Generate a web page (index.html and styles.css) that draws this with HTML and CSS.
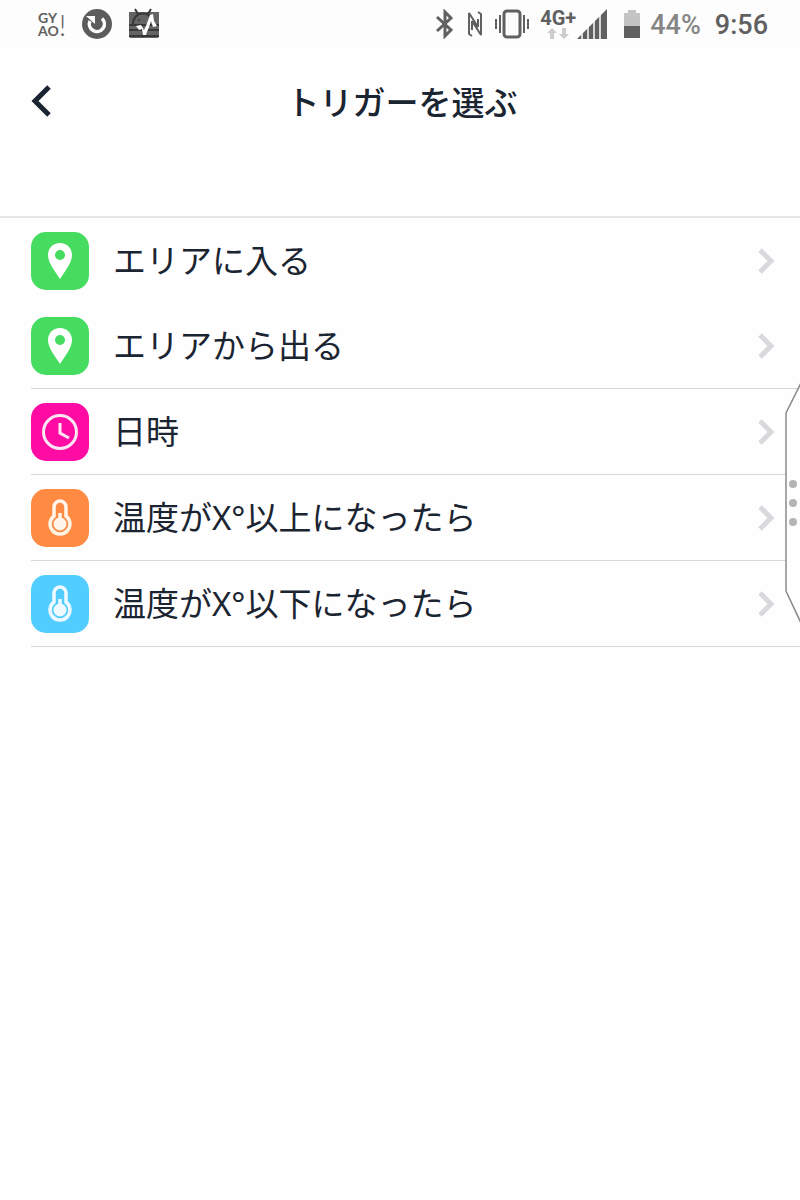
FILE: index.html
```
<!DOCTYPE html>
<html lang="ja">
<head>
  <meta charset="UTF-8" />
  <meta name="viewport" content="width=device-width, initial-scale=1.0"/>
  <title>トリガーを選ぶ</title>
  <link rel="stylesheet" href="styles.css">
</head>
<body>
  <div class="status-bar">
    <div class="status-left">
      <div class="gyao">
        <span>GY<br>AO</span>
        <span class="mark">!</span>
      </div>
      <svg width="32" height="32" viewBox="0 0 32 32">
        <circle cx="16" cy="16" r="15" fill="#5c5c5c"/>
        <path d="M21 10.500A7.500 7.500 0 1 1 9 13" fill="none" stroke="#fff" stroke-width="3.500"/>
        <path d="M5 8h9v8z" fill="#fff"/>
      </svg>
      <svg width="32" height="32" viewBox="0 0 32 32">
        <path d="M1 4h30v24l-1 2H2l-1-2z" fill="#646464"/>
        <path d="M5 16a10 10 0 0 1 20-1M10 6L7 1M20 6l3-5" fill="none" stroke="#383838" stroke-width="2"/>
        <path d="M1 17h30M1 22h30M1 28h30" stroke="#383838" stroke-width="2"/>
        <circle cx="11" cy="12" r="1" fill="#383838"/>
        <path d="M8 18l5-1 3 5 2-4 3 1-2 5-1 3h-3l-1-6-3 1zM18 18l4-11 3-1 1 7 3 5-4 1-2-6-2 6z" fill="#fff"/>
      </svg>
    </div>
    <div class="status-right">
      <svg width="20" height="30" viewBox="0 0 20 30">
        <path d="M4 8l14 13-6 6V3l6 6L4 22" fill="none" stroke="#606060" stroke-width="3"/>
      </svg>
      <svg class="nfc" width="18" height="28" viewBox="0 0 18 28">
        <path d="M6 26l-3-2V3l9 14V9M12 2l3 2v21L6 11v9" fill="none" stroke="#606060" stroke-width="2" stroke-linejoin="bevel"/>
      </svg>
      <svg class="vibrate" width="34" height="30" viewBox="0 0 34 30">
        <rect x="9" y="2" width="16" height="26" rx="3" fill="none" stroke="#606060" stroke-width="3"/>
        <path d="M5 6v18M1 10v10M29 6v18M33 10v10" stroke="#606060" stroke-width="2"/>
      </svg>
      <div class="network">
        <span>4G+</span>
        <svg width="24" height="12" viewBox="0 0 24 12">
          <path d="M6 0l5 5H8v6H4V5H1zM18 11l-5-5h3V0h4v6h3z" fill="#ccc"/>
        </svg>
      </div>
      <svg width="30" height="30" viewBox="0 0 30 30">
        <path d="M0 30L30 0v30z" fill="#606060"/>
        <path d="M5 0v30M11 0v30M17 0v30M23 0v30" stroke="#fdfdfd" stroke-width="1.500"/>
      </svg>
      <svg class="battery" width="18" height="30" viewBox="0 0 18 30">
        <path d="M5 1h8v3h4v13H1V4h4z" fill="#c4c4c4"/>
        <path d="M1 17h16v12H1z" fill="#606060"/>
      </svg>
      <span class="percent">44%</span>
      <span class="time">9:56</span>
    </div>
  </div>

  <header class="header">
    <button class="back" aria-label="戻る">
      <svg width="24" height="34" viewBox="0 0 24 34">
        <path d="M19 3L5 17l14 14" fill="none" stroke="#1b2431" stroke-width="5"/>
      </svg>
    </button>
    <h1>トリガーを選ぶ</h1>
  </header>

  <main class="trigger-area">
    <ul class="trigger-list">
      <li>
        <a href="#enter">
          <span class="icon green">
            <svg width="28" height="38" viewBox="0 0 28 38">
              <path d="M14 1C7 1 2 6 2 13c0 8 7 16 12 24 5-8 12-16 12-24C26 6 21 1 14 1z" fill="#fff"/>
              <circle cx="14" cy="13" r="5" fill="#46dc5f"/>
            </svg>
          </span>
          <span class="label">エリアに入る</span>
          <svg class="arrow" width="18" height="28" viewBox="0 0 18 28"><path d="M2 3l11 11L2 25"/></svg>
        </a>
      </li>
      <li class="line">
        <a href="#leave">
          <span class="icon green">
            <svg width="28" height="38" viewBox="0 0 28 38">
              <path d="M14 1C7 1 2 6 2 13c0 8 7 16 12 24 5-8 12-16 12-24C26 6 21 1 14 1z" fill="#fff"/>
              <circle cx="14" cy="13" r="5" fill="#46dc5f"/>
            </svg>
          </span>
          <span class="label">エリアから出る</span>
          <svg class="arrow" width="18" height="28" viewBox="0 0 18 28"><path d="M2 3l11 11L2 25"/></svg>
        </a>
      </li>
      <li class="line">
        <a href="#time">
          <span class="icon pink">
            <svg width="38" height="38" viewBox="0 0 38 38">
              <circle cx="19" cy="19" r="16.500" fill="none" stroke="#ffe6f5" stroke-width="3"/>
              <path d="M19 10v10l9 5" fill="none" stroke="#ffe6f5" stroke-width="3"/>
            </svg>
          </span>
          <span class="label">日時</span>
          <svg class="arrow" width="18" height="28" viewBox="0 0 18 28"><path d="M2 3l11 11L2 25"/></svg>
        </a>
      </li>
      <li class="line">
        <a href="#above">
          <span class="icon orange">
            <svg width="24" height="38" viewBox="0 0 24 38">
              <path d="M6 17V8a6 6 0 0 1 12 0v9a10 10 0 1 1-12 0z" fill="none" stroke="#fff5e8" stroke-width="3.500"/>
              <path d="M12 14v10" stroke="#fff5e8" stroke-width="3.500"/>
              <circle cx="12" cy="25" r="6.500" fill="#fff5e8"/>
            </svg>
          </span>
          <span class="label">温度がX°以上になったら</span>
          <svg class="arrow" width="18" height="28" viewBox="0 0 18 28"><path d="M2 3l11 11L2 25"/></svg>
        </a>
      </li>
      <li class="line">
        <a href="#below">
          <span class="icon blue">
            <svg width="24" height="38" viewBox="0 0 24 38">
              <path d="M6 17V8a6 6 0 0 1 12 0v9a10 10 0 1 1-12 0z" fill="none" stroke="#eefaff" stroke-width="3.500"/>
              <path d="M12 14v10" stroke="#eefaff" stroke-width="3.500"/>
              <circle cx="12" cy="25" r="6.500" fill="#eefaff"/>
            </svg>
          </span>
          <span class="label">温度がX°以下になったら</span>
          <svg class="arrow" width="18" height="28" viewBox="0 0 18 28"><path d="M2 3l11 11L2 25"/></svg>
        </a>
      </li>
    </ul>

    <!-- edge panel handle, floats over the list -->
    <svg class="edge-handle" width="16" height="240" viewBox="0 0 16 240">
      <path d="M17 0L2 30v178l15 32" fill="#fefefe" stroke="#8a8a8a" stroke-width="1.500"/>
      <g fill="#b4b4b4">
        <circle cx="9" cy="101" r="4"/>
        <circle cx="9" cy="120" r="4"/>
        <circle cx="9" cy="139" r="4"/>
      </g>
    </svg>
  </main>
</body>
</html>
```
FILE: styles.css
```
* {
  margin: 0;
  padding: 0;
  box-sizing: border-box;
}

body {
  font-family: "Noto Sans", "Noto Sans CJK JP", sans-serif;
  background-color: #fefefe;
  color: #1b2431;
}

svg {
  display: block;
  flex-shrink: 0;
}

.status-bar {
  display: flex;
  justify-content: space-between;
  align-items: center;
  height: 48px;
  padding: 0 32px 0 38px;
  background-color: #fdfdfd;
  color: #606060;
  font-family: Roboto, sans-serif;
}

.status-left,
.status-right {
  display: flex;
  align-items: center;
}

.status-left {
  gap: 15px;
}

.gyao {
  display: flex;
  align-items: center;
  width: 28px;
  font-family: Lato, sans-serif;
  font-size: 14px;
  line-height: 13px;
  font-weight: bold;
}

.mark {
  font-size: 30px;
  line-height: 26px;
  font-weight: 300;
}

.nfc {
  margin-left: 13px;
}

.vibrate {
  margin: 0 10px 0 11px;
}

.network {
  display: flex;
  flex-direction: column;
  align-items: center;
  width: 38px;
  font-size: 20px;
  line-height: 20px;
  font-weight: bold;
}

.battery {
  margin: 0 9px 0 16px;
}

.percent,
.time {
  padding-top: 2px;
  font-size: 27px;
  font-weight: 500;
}

.percent {
  color: #858585;
}

.time {
  margin-left: 14px;
}

.header {
  display: grid;
  grid-template-columns: 84px 1fr 80px;
  align-items: center;
  height: 106px;
}

.back {
  justify-self: start;
  margin-left: 30px;
  background: none;
  border: none;
  cursor: pointer;
}

h1 {
  font-size: 33px;
  line-height: 48px;
  font-weight: 500;
  text-align: center;
  font-family: "Noto Sans CJK JP", sans-serif;
}

.trigger-area {
  position: relative;
  margin-top: 62px;
  border-top: 2px solid #e6e6e6;
}

.trigger-list {
  list-style: none;
  padding-left: 31px;
}

.line {
  border-bottom: 1px solid #d8d8d8;
}

.trigger-list a {
  display: flex;
  align-items: center;
  height: 85px;
  padding-right: 24px;
  color: inherit;
  text-decoration: none;
}

.icon {
  display: flex;
  align-items: center;
  justify-content: center;
  width: 58px;
  height: 58px;
  border-radius: 15px;
}

.green {
  background-color: #46dc5f;
}

.pink {
  background-color: #ff0ca5;
}

.orange {
  background-color: #ff8a42;
}

.blue {
  background-color: #52cdff;
}

.label {
  flex: 1;
  margin-left: 24px;
  font-size: 33px;
  line-height: 48px;
}

.arrow {
  fill: none;
  stroke: #d8d9dc;
  stroke-width: 5;
}

.edge-handle {
  position: absolute;
  top: 165px;
  right: 0;
}
```
